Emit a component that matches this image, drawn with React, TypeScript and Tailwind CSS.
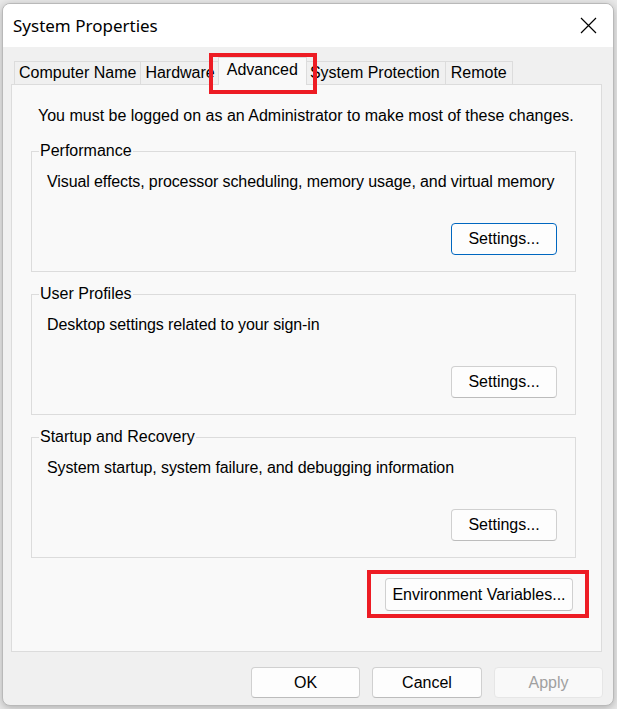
import React from "react";

const font = { fontFamily: '"Liberation Sans", Arial, sans-serif' };

const tabs = ["Computer Name", "Hardware", "Advanced", "System Protection", "Remote"];

function WinButton({
  label,
  className = "",
  focused = false,
  disabled = false,
}: {
  label: string;
  className?: string;
  focused?: boolean;
  disabled?: boolean;
}) {
  return (
    <button
      type="button"
      className={`flex items-center justify-center rounded-[4px] border text-[16px] leading-[18px] ${
        focused
          ? "border-[#0067c0] bg-[#fdfdfd] text-black"
          : disabled
          ? "border-[#e6e6e6] bg-[#f9f9f9] text-[#a0a0a0]"
          : "border-[#d0d0d0] border-b-[#bcbcbc] bg-[#fdfdfd] text-black"
      } ${className}`}
    >
      {label}
    </button>
  );
}

function Group({
  title,
  text,
  focused = false,
  className = "",
}: {
  title: string;
  text: string;
  focused?: boolean;
  className?: string;
}) {
  return (
    <fieldset className={`border border-[#dcdcdc] ${className}`}>
      <legend className="ml-[7px] px-[1px] text-[16px] leading-[18px] text-black">{title}</legend>
      <div className="flex flex-col pl-[15px] pr-[18px] pb-[16px]">
        <div className="mt-[13px] whitespace-nowrap text-[16px] leading-[18px] tracking-[-0.1px] text-black">
          {text}
        </div>
        <div className="mt-[32px] flex justify-end">
          <WinButton label="Settings..." focused={focused} className="h-[32px] w-[106px]" />
        </div>
      </div>
    </fieldset>
  );
}

export default function App() {
  return (
    <div className="h-[709px] w-[617px] overflow-hidden bg-[#e9e9e9] pl-[2px] pt-[3px]" style={font}>
      <div className="flex h-[703px] w-[612px] flex-col overflow-hidden rounded-[8px] border border-[#b9b9b9] bg-[#f0f0f0] shadow-[0_2px_8px_rgba(0,0,0,0.25)]">
        {/* title bar */}
        <div className="flex h-[43px] items-center justify-between bg-white pl-[10px] pr-[16px]">
          <span
            className="text-[17px] text-black"
            style={{ fontFamily: '"Noto Sans", "Open Sans", sans-serif' }}
          >
            System Properties
          </span>
          <svg width="17" height="17" viewBox="0 0 17 17" className="text-black">
            <path d="M1 1 L16 16 M16 1 L1 16" stroke="currentColor" strokeWidth="1.2" fill="none" />
          </svg>
        </div>

        {/* body */}
        <div className="flex flex-1 flex-col pl-[8px] pr-[11px] pt-[10px] pb-[7px]">
          <div className="ml-[3px] flex h-[27px] items-end">
            {tabs.map((t, i) =>
              t === "Advanced" ? (
                <div
                  key={t}
                  className="relative z-10 -mx-[2px] -mb-[1px] flex h-[28px] items-center border border-b-0 border-[#dcdcdc] bg-[#f9f9f9] px-[8px] pb-[4px] text-[16px] leading-[18px] text-black"
                >
                  {t}
                  <div className="pointer-events-none absolute -top-[5px] -bottom-[9px] -left-[10px] -right-[11px] border-[4px] border-[#ed1c24]" />
                </div>
              ) : (
                <div
                  key={t}
                  className={`-ml-[1px] flex h-[23px] items-center border border-b-0 border-[#dcdcdc] bg-[#f0f0f0] text-[16px] leading-[18px] text-black first:ml-0 ${
                    i > 2 ? "px-[5px]" : "px-[4px]"
                  }`}
                >
                  {t}
                </div>
              )
            )}
          </div>

          <div className="flex flex-1 flex-col border border-[#dcdcdc] bg-[#f9f9f9] pl-[19px] pr-[25px] pt-[22px]">
            <div className="ml-[7px] text-[16px] leading-[18px] text-black">
              You must be logged on as an Administrator to make most of these changes.
            </div>
            <Group
              className="mt-[17px]"
              title="Performance"
              text="Visual effects, processor scheduling, memory usage, and virtual memory"
              focused
            />
            <Group
              className="mt-[13px]"
              title="User Profiles"
              text="Desktop settings related to your sign-in"
            />
            <Group
              className="mt-[13px]"
              title="Startup and Recovery"
              text="System startup, system failure, and debugging information"
            />
            <div className="mt-[20px] flex justify-end pr-[3px]">
              <div className="relative">
                <WinButton label="Environment Variables..." className="h-[33px] w-[188px]" />
                <div className="pointer-events-none absolute -top-[8px] -bottom-[7px] -left-[18px] -right-[16px] border-[4px] border-[#ed1c24]" />
              </div>
            </div>
          </div>

          <div className="-mr-[1px] flex justify-end gap-[12px] pt-[15px]">
            <WinButton label="OK" className="h-[31px] w-[109px]" />
            <WinButton label="Cancel" className="h-[31px] w-[110px]" />
            <WinButton label="Apply" disabled className="h-[31px] w-[109px]" />
          </div>
        </div>
      </div>
    </div>
  );
}
